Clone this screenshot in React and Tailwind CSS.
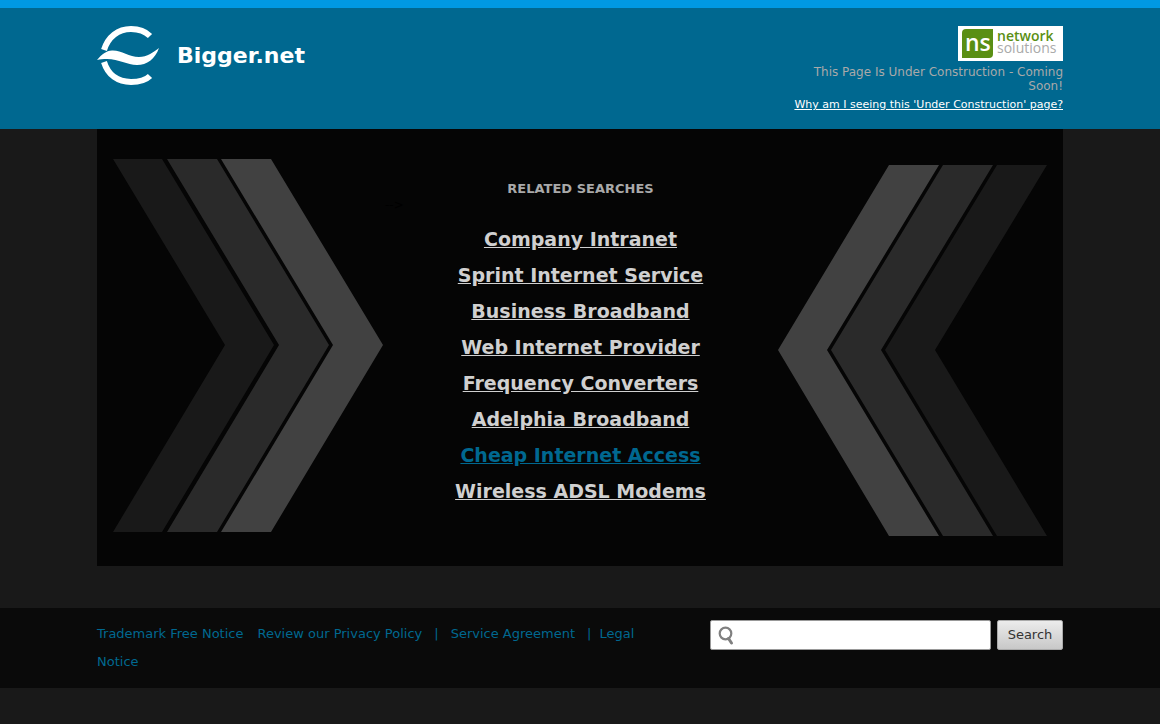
import React, { useState } from "react";

const searches = [
  "Company Intranet",
  "Sprint Internet Service",
  "Business Broadband",
  "Web Internet Provider",
  "Frequency Converters",
  "Adelphia Broadband",
  "Cheap Internet Access",
  "Wireless ADSL Modems",
];

function SiteLogo() {
  return (
    <svg viewBox="0 0 62 60" className="w-[62px] h-[60px] shrink-0" fill="none" aria-hidden="true">
      <path d="M7 24 C11 11 21 3 34 3 C42 3 49 6 53 10" stroke="#fff" strokeWidth="6" />
      <path d="M7 36 C11 49 21 56 34 56 C42 56 49 54 53 50" stroke="#fff" strokeWidth="6" />
      <path
        d="M0 34 C5 28 9 25 15 24.5 C24 24 32 31 42 31 C50 31 57 26 62 22 C58 33 50 39 40 39 C30 39 22 33 10 33 C6 33 3 33 0 34 Z"
        fill="#fff"
      />
    </svg>
  );
}

function NetworkSolutionsLogo() {
  return (
    <svg viewBox="0 0 105 35" className="w-[105px] h-[35px]" role="img" aria-label="network solutions">
      <rect width="105" height="35" fill="#fff" />
      <path d="M8 3 H35 V28 Q35 32 31 32 H4 V7 Q4 3 8 3 Z" fill="#5a8f14" />
      <text x="7" y="25" fontSize="23" fontFamily="'Open Sans', sans-serif" fontWeight="600" fill="#fff">
        ns
      </text>
      <text x="39" y="15" fontSize="14" fontFamily="'Open Sans', sans-serif" fontWeight="600" fill="#5a8f14">
        network
      </text>
      <text x="39" y="27" fontSize="14" fontFamily="'Open Sans', sans-serif" fill="#aaa">
        solutions
      </text>
    </svg>
  );
}

// Three stacked chevrons, darkest on the outer side
function LeftArrows() {
  return (
    <svg viewBox="0 0 270 373" className="w-[270px] h-[373px] shrink-0" aria-hidden="true">
      <path d="M0 0 H49 L161 186 L49 373 H0 L112 186 Z" fill="#191919" />
      <path d="M54 0 H104 L216 186 L104 373 H54 L166 186 Z" fill="#2a2a2a" />
      <path d="M108 0 H158 L270 186 L158 373 H108 L220 186 Z" fill="#414141" />
    </svg>
  );
}

function RightArrows() {
  return (
    <svg viewBox="0 0 269 371" className="w-[269px] h-[371px] mt-[6px] shrink-0" aria-hidden="true">
      <path d="M111 0 H161 L49 185 L161 371 H111 L0 185 Z" fill="#414141" />
      <path d="M165 0 H215 L103 185 L215 371 H165 L53 185 Z" fill="#2a2a2a" />
      <path d="M219 0 H269 L157 185 L269 371 H219 L107 185 Z" fill="#191919" />
    </svg>
  );
}

export default function App() {
  const [query, setQuery] = useState("");

  return (
    <div className="min-h-screen bg-[#191919] font-['DejaVu_Sans',sans-serif]">
      {/* Header */}
      <header className="border-t-8 border-[#0099e3] bg-[#006890]">
        <div className="max-w-[966px] mx-auto pt-[18px] pb-4 flex justify-between items-start">
          <div className="flex items-center gap-[18px]">
            <SiteLogo />
            <h1 className="text-[22px] leading-7 font-bold text-white">Bigger.net</h1>
          </div>

          <div className="w-[280px] flex flex-col items-end text-right">
            <NetworkSolutionsLogo />
            <p className="mt-1 text-[12px] leading-[14px] text-[#a9a9a9]">
              This Page Is Under Construction - Coming Soon!
            </p>
            <a href="#why" className="mt-1 text-[11px] leading-4 text-white underline whitespace-nowrap">
              Why am I seeing this 'Under Construction' page?
            </a>
          </div>
        </div>
      </header>

      {/* Related searches */}
      <main className="max-w-[966px] mx-auto bg-[#050505] px-4 pt-[30px] pb-[30px] flex justify-between items-start">
        <LeftArrows />
        <div className="flex-1 pt-[22px]">
          <h2 className="text-[13px] leading-4 font-bold text-center text-[#a9a9a9]">RELATED SEARCHES</h2>
          <p className="text-[12px] leading-4 pl-[2px] text-black">--&gt;</p>
          <ul className="mt-[8px] text-center">
            {searches.map((item) => (
              <li key={item} className="h-9 leading-9">
                <a
                  href="#search"
                  className={
                    item === "Cheap Internet Access"
                      ? "text-[19px] font-bold underline text-[#006890]"
                      : "text-[19px] font-bold underline text-[#d0d0d0] hover:text-[#006890]"
                  }
                >
                  {item}
                </a>
              </li>
            ))}
          </ul>
        </div>
        <RightArrows />
      </main>

      {/* Footer */}
      <footer className="mt-[42px] bg-[#0a0a0a]">
        <div className="max-w-[966px] mx-auto py-3 flex items-start">
          <nav className="flex-1 pr-8 text-[13px] leading-7 text-[#006890]">
            <a href="#trademark" className="mr-[14px]">Trademark Free Notice</a>
            <a href="#privacy">Review our Privacy Policy</a>
            <span className="mx-3">|</span>
            <a href="#service">Service Agreement</a>
            <span className="ml-3 mr-2">|</span>
            <a href="#legal">
              <span>Legal</span> <span>Notice</span>
            </a>
          </nav>

          <form className="flex gap-[6px]" onSubmit={(e) => e.preventDefault()}>
            <div className="relative">
              <input
                type="text"
                aria-label="Search"
                value={query}
                onChange={(e) => setQuery(e.target.value)}
                className="w-[281px] h-[30px] pl-8 pr-2 text-[13px] bg-white border border-[#999] rounded-xs focus:outline-none"
              />
              <svg
                viewBox="0 0 16 20"
                className="absolute left-2 top-[6px] w-4 h-5 pointer-events-none"
                fill="none"
                stroke="#808080"
                aria-hidden="true"
              >
                <circle cx="7.5" cy="7.5" r="5.8" strokeWidth="2.2" />
                <path d="M10.5 12.5 L13.5 17" strokeWidth="3" strokeLinecap="round" />
              </svg>
            </div>
            <button
              type="submit"
              className="w-[66px] h-[30px] text-[13px] text-[#333] bg-linear-to-b from-[#ececec] to-[#c8c8c8] border border-[#aaa] rounded-xs"
            >
              Search
            </button>
          </form>
        </div>
      </footer>
    </div>
  );
}
